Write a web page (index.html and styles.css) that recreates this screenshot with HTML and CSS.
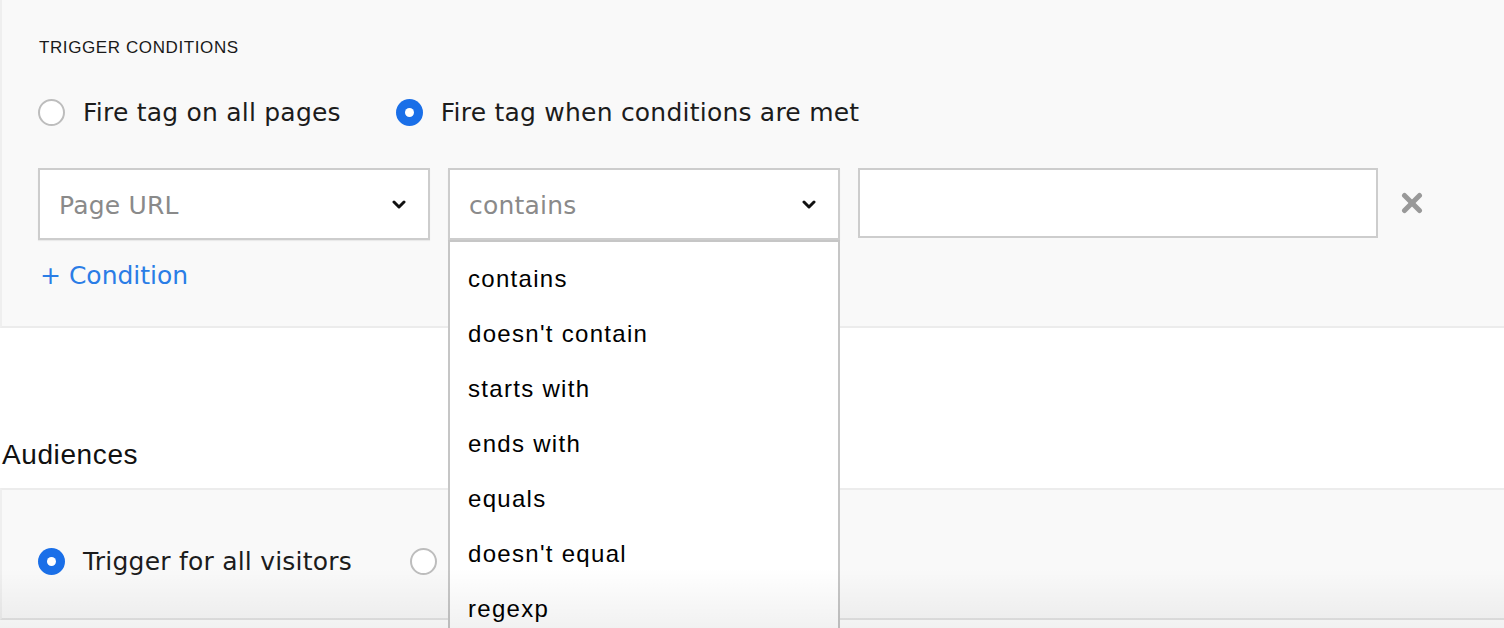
FILE: index.html
```html
<!DOCTYPE html>
<html>
<head>
<meta charset="utf-8">
<link rel="stylesheet" href="styles.css">
</head>
<body>
<div class="page">
  <section class="panel trigger">
    <div class="section-title">TRIGGER CONDITIONS</div>
    <div class="radio-row">
      <label class="radio-item"><span class="radio"></span><span class="radio-label">Fire tag on all pages</span></label>
      <label class="radio-item"><span class="radio checked"></span><span class="radio-label">Fire tag when conditions are met</span></label>
    </div>
    <div class="condition-row">
      <div class="select"><span class="select-value">Page URL</span>
        <svg class="chevron" width="14" height="11" viewBox="0 0 14 11"><polyline points="2,3 7,8 12,3" fill="none" stroke="#111" stroke-width="3" stroke-linecap="round" stroke-linejoin="round"/></svg>
      </div>
      <div class="select"><span class="select-value">contains</span>
        <svg class="chevron" width="14" height="11" viewBox="0 0 14 11"><polyline points="2,3 7,8 12,3" fill="none" stroke="#111" stroke-width="3" stroke-linecap="round" stroke-linejoin="round"/></svg>
      </div>
      <div class="text-input"></div>
      <svg class="remove" width="22" height="22" viewBox="0 0 22 22"><line x1="3.5" y1="3.5" x2="18.5" y2="18.5" stroke="#999" stroke-width="5" stroke-linecap="round"/><line x1="18.5" y1="3.5" x2="3.5" y2="18.5" stroke="#999" stroke-width="5" stroke-linecap="round"/></svg>
    </div>
    <div class="add-condition">+ Condition</div>
  </section>

  <h2 class="heading">Audiences</h2>
  <section class="panel audiences">
    <div class="radio-row">
      <label class="radio-item"><span class="radio checked"></span><span class="radio-label">Trigger for all visitors</span></label>
      <span class="radio-item"><span class="radio"></span></span>
    </div>
  </section>

  <ul class="dropdown">
    <li>contains</li>
    <li>doesn't contain</li>
    <li>starts with</li>
    <li>ends with</li>
    <li>equals</li>
    <li>doesn't equal</li>
    <li>regexp</li>
  </ul>
  <div class="bottom-fade"></div>
</div>
</body>
</html>
```
FILE: styles.css
```css
html, body {
  margin: 0;
  padding: 0;
  background: #fff;
}
.page {
  position: relative;
  width: 1504px;
  height: 628px;
  overflow: hidden;
  font-family: "DejaVu Sans", Verdana, sans-serif;
  color: #1c1c1c;
}
.panel {
  background: #f9f9f9;
  border-left: 2px solid #efefef;
  box-sizing: border-box;
}
.trigger {
  height: 328px;
  padding: 38px 0 0 36px;
  border-bottom: 2px solid #ececec;
}
.section-title {
  font-family: "Liberation Sans", Arial, sans-serif;
  font-size: 17px;
  line-height: 20px;
  letter-spacing: 0.6px;
  color: #1a1a1a;
  padding-left: 1px;
}
.radio-row {
  display: flex;
  align-items: flex-start;
  gap: 55px;
  height: 30px;
}
.trigger .radio-row {
  margin-top: 39px;
}
.radio-item {
  display: flex;
  align-items: flex-start;
  gap: 18px;
  white-space: nowrap;
}
.radio {
  box-sizing: border-box;
  width: 27px;
  height: 27px;
  margin-top: 2px;
  border-radius: 50%;
  border: 2px solid #bdbdbd;
  background: #fff;
  flex: none;
  position: relative;
}
.radio.checked {
  border: none;
  background: #1a6fe8;
}
.radio.checked::after {
  content: "";
  position: absolute;
  left: 9px;
  top: 9px;
  width: 9px;
  height: 9px;
  border-radius: 50%;
  background: #fff;
}
.radio-label {
  font-size: 25px;
  line-height: 30px;
  letter-spacing: 0.22px;
  padding-top: 1px;
}
.condition-row {
  display: flex;
  align-items: flex-start;
  gap: 18px;
  margin-top: 41px;
}
.select {
  box-sizing: border-box;
  width: 392px;
  height: 72px;
  border: 2px solid #cdcdcd;
  background: #fff;
  box-shadow: 0 1px 1px rgba(0,0,0,0.06);
  display: flex;
  align-items: center;
  justify-content: space-between;
  padding: 4px 22px 0 19px;
}
.select-value {
  font-size: 25px;
  line-height: 30px;
  letter-spacing: 0.2px;
  color: #8a8a8a;
}
.chevron {
  flex: none;
  margin-top: -4px;
}
.text-input {
  box-sizing: border-box;
  width: 520px;
  height: 70px;
  border: 2px solid #cdcdcd;
  background: #fff;
}
.remove {
  margin-left: 5px;
  margin-top: 24px;
  flex: none;
}
.add-condition {
  margin-top: 21px;
  padding-left: 2px;
  font-size: 25px;
  line-height: 30px;
  color: #2a7de6;
}
.heading {
  margin: 111px 0 0 2px;
  font-family: "Liberation Sans", Arial, sans-serif;
  font-weight: normal;
  font-size: 28px;
  line-height: 32px;
  letter-spacing: 0.6px;
  color: #111;
}
.audiences {
  margin-top: 17px;
  height: 132px;
  border-top: 2px solid #ececec;
  border-bottom: 2px solid #e4e4e4;
  padding: 56px 0 0 36px;
}
.audiences .radio-row {
  gap: 58px;
}
.dropdown {
  position: absolute;
  left: 448px;
  top: 240px;
  width: 392px;
  height: 420px;
  box-sizing: border-box;
  margin: 0;
  padding: 9px 0 0 18px;
  list-style: none;
  background: #fff;
  border: 2px solid #c6c6c6;
  font-family: "Liberation Sans", Arial, sans-serif;
  font-size: 24px;
  letter-spacing: 1.3px;
  color: #000;
}
.dropdown li {
  height: 55px;
  line-height: 55px;
}
.bottom-fade {
  position: absolute;
  left: 0;
  right: 0;
  bottom: 0;
  height: 60px;
  background: linear-gradient(rgba(0,0,0,0), rgba(0,0,0,0.055));
  pointer-events: none;
}
```
